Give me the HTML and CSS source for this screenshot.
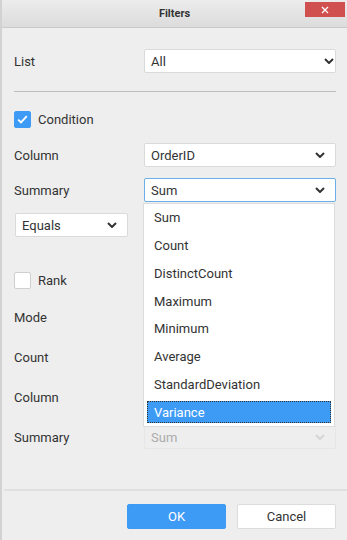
FILE: index.html
```html
<!DOCTYPE html>
<html lang="en">
<head>
<meta charset="UTF-8">
<meta name="viewport" content="width=device-width, initial-scale=1.0">
<title>Filters</title>
<link rel="stylesheet" href="styles.css">
</head>
<body>

<div class="dialog">
  <!-- title bar -->
  <div class="titlebar">
    <span class="title">Filters</span>
    <button class="close" aria-label="Close">
      <svg width="8" height="8" viewBox="0 0 8 8"><path d="M1 1L7 7M7 1L1 7" stroke="#fff" stroke-width="1.3" fill="none"/></svg>
    </button>
  </div>

  <div class="content">
    <div class="row row-list">
      <span class="label">List</span>
      <div class="select wide tight">All
        <svg class="chev" width="10" height="6" viewBox="0 0 10 6"><path d="M1 1L5 5L9 1" stroke="#333" stroke-width="2" fill="none"/></svg>
      </div>
    </div>

    <div class="divider"></div>

    <div class="check-row row-condition">
      <span class="box checked">
        <svg width="11" height="9" viewBox="0 0 11 9"><path d="M1.2 4.6L4 7.4L9.8 1.2" stroke="#fff" stroke-width="1.8" fill="none"/></svg>
      </span>
      <span class="label">Condition</span>
    </div>

    <div class="row row-column">
      <span class="label">Column</span>
      <div class="select wide">OrderID
        <svg class="chev" width="10" height="6" viewBox="0 0 10 6"><path d="M1 1L5 5L9 1" stroke="#333" stroke-width="2" fill="none"/></svg>
      </div>
    </div>

    <div class="row row-summary">
      <span class="label">Summary</span>
      <div class="select wide focus">Sum
        <svg class="chev" width="10" height="6" viewBox="0 0 10 6"><path d="M1 1L5 5L9 1" stroke="#333" stroke-width="2" fill="none"/></svg>
      </div>
    </div>

    <div class="row row-equals">
      <div class="select small">Equals
        <svg class="chev" width="10" height="6" viewBox="0 0 10 6"><path d="M1 1L5 5L9 1" stroke="#333" stroke-width="2" fill="none"/></svg>
      </div>
    </div>

    <div class="check-row row-rank">
      <span class="box"></span>
      <span class="label">Rank</span>
    </div>

    <div class="row row-gap">
      <span class="label">Mode</span>
    </div>
    <div class="row row-gap">
      <span class="label">Count</span>
    </div>
    <div class="row row-gap">
      <span class="label">Column</span>
    </div>
    <div class="row row-gap">
      <span class="label">Summary</span>
      <div class="select wide disabled">Sum
        <svg class="chev" width="10" height="6" viewBox="0 0 10 6"><path d="M1 1L5 5L9 1" stroke="#d4d4d4" stroke-width="2" fill="none"/></svg>
      </div>
    </div>

    <!-- open popup of the Summary select -->
    <ul class="popup">
      <li><span>Sum</span></li>
      <li><span>Count</span></li>
      <li><span>DistinctCount</span></li>
      <li><span>Maximum</span></li>
      <li><span>Minimum</span></li>
      <li><span>Average</span></li>
      <li><span>StandardDeviation</span></li>
      <li class="active"><span>Variance</span></li>
    </ul>
  </div>

  <div class="footer">
    <button class="btn primary">OK</button>
    <button class="btn">Cancel</button>
  </div>
</div>

</body>
</html>
```

FILE: styles.css
```css
body {
  margin: 0;
  font-family: Roboto, 'Liberation Sans', sans-serif;
  font-size: 13px;
  color: #333;
  background-color: #eeeeee;
}
.dialog {
  width: 347px;
  height: 540px;
  box-sizing: border-box;
  border-left: 2px solid #d2d2d2;
  display: flex;
  flex-direction: column;
  background-color: #eeeeee;
  position: relative;
}
.titlebar {
  height: 27px;
  flex-shrink: 0;
  border-bottom: 1px solid #cacaca;
  background: linear-gradient(#ececec, #dcdcdc);
  display: flex;
  align-items: center;
  justify-content: center;
  position: relative;
}
.title {
  font-size: 11px;
  font-weight: bold;
  color: #333;
}
.close {
  position: absolute;
  top: 2px;
  right: 2px;
  width: 40px;
  height: 15px;
  border: none;
  padding: 0;
  background-color: #d05050;
  display: flex;
  align-items: center;
  justify-content: center;
}
.content {
  flex: 1;
  padding: 21px 11px 0 12px;
  position: relative;
}
.row {
  display: flex;
  align-items: center;
  justify-content: space-between;
  height: 24px;
}
.row-column { margin-top: 15px; }
.row-summary, .row-equals { margin-top: 11px; }
.row-gap { margin-top: 16px; }
.divider {
  height: 1px;
  background-color: #bdbdbd;
  margin-top: 18px;
}
.check-row {
  display: flex;
  align-items: center;
  height: 17px;
}
.row-condition { margin-top: 19px; }
.row-rank { margin-top: 35px; }
.box {
  width: 15px;
  height: 15px;
  border: 1px solid #cfcfcf;
  border-radius: 2px;
  background-color: #fff;
  margin-right: 7px;
  display: flex;
  align-items: center;
  justify-content: center;
}
.box.checked {
  background-color: #3d9bf6;
  border-color: #3d9bf6;
}
.select {
  height: 24px;
  box-sizing: border-box;
  border: 1px solid #dadada;
  border-radius: 2px;
  background-color: #fff;
  display: flex;
  align-items: center;
  justify-content: space-between;
  padding: 0 10px 0 6px;
}
.select.wide { width: 192px; }
.select.tight { padding-right: 1px; }
.select.small {
  width: 113px;
  margin-left: 1px;
}
.select.focus { border-color: #6aaeea; }
.select.disabled {
  background-color: #eeeeee;
  border-color: #e6e6e6;
  color: #acacac;
}
.popup {
  position: absolute;
  left: 141px;
  top: 175px;
  width: 192px;
  margin: 0;
  padding: 0;
  list-style: none;
  box-sizing: border-box;
  border: 1px solid #dcdcdc;
  background-color: #fff;
}
.popup li {
  height: 27.75px;
  box-sizing: border-box;
  padding: 3px;
}
.popup li span {
  display: flex;
  align-items: center;
  height: 100%;
  box-sizing: border-box;
  border: 1px dotted transparent;
  padding-left: 6px;
}
.popup li.active span {
  background-color: #3d9bf6;
  border-color: #333;
  color: #fff;
}
.footer {
  height: 51px;
  flex-shrink: 0;
  border-top: 2px solid #e0e0e0;
  margin-left: 2px;
  display: flex;
  justify-content: flex-end;
  gap: 11px;
  padding: 13px 11px 0 0;
  box-sizing: border-box;
}
.btn {
  width: 99px;
  height: 25px;
  font-family: Roboto, 'Liberation Sans', sans-serif;
  font-size: 13px;
  color: #333;
  background-color: #fff;
  border: 1px solid #dcdcdc;
  border-radius: 2px;
}
.btn.primary {
  background-color: #3d9bf6;
  border-color: #3d9bf6;
  color: #fff;
}
```
